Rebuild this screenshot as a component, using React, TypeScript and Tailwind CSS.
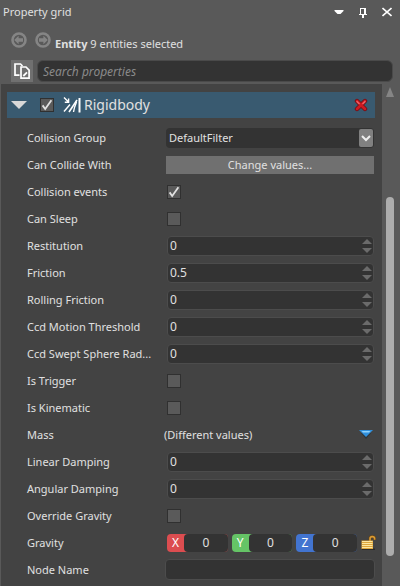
import { useState } from "react";
import type { ReactNode } from "react";

function Row({ label, id, children }: { label: string; id: string; children: ReactNode }) {
  return (
    <div className="flex h-[27px] items-center">
      <label htmlFor={id} className="w-[140px] shrink-0 whitespace-nowrap">
        {label}
      </label>
      <div className="flex min-w-0 flex-1 items-center">{children}</div>
    </div>
  );
}

function Check({ id, checked = false, label }: { id: string; checked?: boolean; label?: string }) {
  const [on, setOn] = useState(checked);
  return (
    <span className="relative flex size-[14px] shrink-0">
      <input
        id={id}
        type="checkbox"
        aria-label={label}
        checked={on}
        onChange={(e) => setOn(e.target.checked)}
        className="size-[14px] appearance-none border border-[#303030] bg-[#5a5a5a]"
      />
      {on && (
        <svg viewBox="0 0 14 14" className="pointer-events-none absolute inset-0 size-[14px]" fill="none">
          <path d="M2.6 7.4 L5.2 11 L11.4 2.2" stroke="#e0e0e0" strokeWidth="1.8" />
        </svg>
      )}
    </span>
  );
}

function NumberBox({ id, value }: { id: string; value: string }) {
  return (
    <div className="flex h-[20px] min-w-0 flex-1 items-center rounded border border-[#4c4c4c] bg-[#333333] pr-px">
      <input id={id} defaultValue={value} className="min-w-0 flex-1 bg-transparent px-0.5 text-xs outline-none" />
      <span className="flex flex-col gap-1">
        <button aria-label="Increase" className="block">
          <svg viewBox="0 0 10 5" className="h-[5px] w-[10px]"><path d="M0 5 L5 0 L10 5Z" fill="#6b6b6b" /></svg>
        </button>
        <button aria-label="Decrease" className="block">
          <svg viewBox="0 0 10 5" className="h-[5px] w-[10px]"><path d="M0 0 L5 5 L10 0Z" fill="#6b6b6b" /></svg>
        </button>
      </span>
    </div>
  );
}

function Axis({ name, color }: { name: string; color: string }) {
  return (
    <div className={`flex h-[18px] min-w-0 flex-1 rounded text-xs ${color}`}>
      <label htmlFor={`gravity-${name}`} className="w-[17px] shrink-0 text-center leading-[18px] text-white">
        {name}
      </label>
      <input
        id={`gravity-${name}`}
        defaultValue="0"
        className="w-0 min-w-0 flex-1 rounded bg-[#333333] text-center outline-none"
      />
    </div>
  );
}

function NavArrow({ back = false }: { back?: boolean }) {
  return (
    <button aria-label={back ? "Back" : "Forward"} className="size-4">
      <svg viewBox="0 0 16 16" className={back ? "size-4" : "size-4 rotate-180"} fill="none">
        <circle cx="8" cy="8" r="6.5" stroke="#858585" strokeWidth="2.6" />
        <path d="M3.2 8 L7.6 3.8 V6.3 H12 V9.7 H7.6 V12.2Z" fill="#858585" />
      </svg>
    </button>
  );
}

export default function App() {
  return (
    <main className="flex min-h-screen flex-col bg-[#595959] font-['Noto_Sans','Open_Sans',sans-serif] text-[11px] leading-4 text-[#e0e0e0]">
      <header className="flex h-6 items-center pl-[3px] pr-2">
        <h1 className="flex-1">Property grid</h1>
        <div className="flex items-center gap-[14px]">
          <button aria-label="Options">
            <svg viewBox="0 0 10 10" className="size-[10px]"><path d="M.5 3 H9.5 V4 L6.5 7 H3.5 L.5 4Z" fill="#fff" /></svg>
          </button>
          <button aria-label="Pin">
            <svg viewBox="0 0 10 12" className="h-3 w-[10px]" fill="#fff" shapeRendering="crispEdges">
              <path d="M2 2 H8 V8 H9 V9 H6 V12 H4 V9 H1 V8 H2Z M3 3 V8 H6 V3Z" fillRule="evenodd" />
            </svg>
          </button>
          <button aria-label="Close">
            <svg viewBox="0 0 10 10" className="size-[10px]"><path d="M.5 1 L9.5 9 M9.5 1 L.5 9" stroke="#fff" strokeWidth="1.6" /></svg>
          </button>
        </div>
      </header>

      <nav className="flex h-9 items-center gap-2 pb-1 pl-[11px]">
        <NavArrow back />
        <NavArrow />
        <p className="-ml-1 pt-2"><b>Entity</b> 9 entities selected</p>
      </nav>

      <div className="flex h-6 items-start pl-[11px] pr-[7px]">
        <button aria-label="Copy properties" className="flex size-[22px] items-center justify-center bg-[#707070]">
          <svg viewBox="0 0 16 16" className="size-4" fill="none" stroke="#fff" strokeWidth="1.7">
            <path d="M5.5 12.2 H1 V1 H6.5 L8.5 3" />
            <path d="M7 4 H12 L15.1 7.2 V15.1 H7Z" />
            <path d="M9.3 13 L13 9.3" strokeWidth="1.8" />
          </svg>
        </button>
        <input
          type="search"
          aria-label="Search properties"
          placeholder="Search properties"
          className="ml-1 h-[22px] min-w-0 flex-1 rounded-md border border-[#4a4a4a] bg-[#333333] px-[5px] text-xs italic outline-none placeholder:text-[#8a8a8a]"
        />
      </div>

      <div className="flex flex-1">
        <section className="ml-px min-w-0 flex-1 bg-[#434343] pl-1.5 pr-[7px] pt-2">
          <div className="flex h-[26px] items-center bg-[#395a70] pl-1 pr-[7px]">
            <button aria-label="Collapse">
              <svg viewBox="0 0 16 8" className="h-2 w-4"><path d="M0 0 H16 L8 8Z" fill="#d8d8d8" /></svg>
            </button>
            <span className="w-[13px]" />
            <Check id="rigidbody" checked label="Enable Rigidbody" />
            <svg viewBox="0 0 18 18" className="ml-[9px] size-[18px]" fill="none" stroke="#fff">
              <path d="M1 1.5 L5 5.5 M5.6 2.4 V6.2 H1.8" strokeWidth="1.4" />
              <path d="M1 15.5 L7 8.5" strokeWidth="1.4" />
              <path d="M6 16 L14 4" strokeWidth="1.6" />
              <path d="M10.5 16 Q11 12 13.5 6" strokeWidth="1.4" />
              <path d="M16.5 2 V16.5" strokeWidth="2" />
            </svg>
            <h2 className="ml-[3px] flex-1 text-sm">Rigidbody</h2>
            <button aria-label="Remove component">
              <svg viewBox="0 0 14 14" className="size-[14px]">
                <path d="M3 3 L11 11 M11 3 L3 11" stroke="#6d0f16" strokeWidth="4.4" strokeLinecap="round" />
                <path d="M3 3 L11 11 M11 3 L3 11" stroke="#cf1920" strokeWidth="2.8" strokeLinecap="round" />
                <path d="M2.6 3.2 L5.5 6 M11.4 3.2 L8.5 6" stroke="#f0656a" strokeWidth="1.4" />
              </svg>
            </button>
          </div>

          <div className="pb-2 pl-5 pr-px pt-1.5">
            <Row label="Collision Group" id="group">
              <div className="relative -ml-px flex min-w-0 flex-1">
                <select id="group" className="h-[20px] w-full appearance-none rounded bg-[#333333] px-[3px] outline-none">
                  <option>DefaultFilter</option>
                </select>
                <svg viewBox="0 0 14 18" className="pointer-events-none absolute right-px top-px h-[18px] w-[14px]" fill="none">
                  <rect width="14" height="18" rx="2" fill="#808080" />
                  <path d="M3 7 L7 11 L11 7" stroke="#eee" strokeWidth="2" />
                </svg>
              </div>
            </Row>
            <Row label="Can Collide With" id="collide">
              <button id="collide" className="-ml-px h-[18px] flex-1 bg-[#707070]">Change values...</button>
            </Row>
            <Row label="Collision events" id="events"><Check id="events" checked /></Row>
            <Row label="Can Sleep" id="sleep"><Check id="sleep" /></Row>
            <Row label="Restitution" id="restitution"><NumberBox id="restitution" value="0" /></Row>
            <Row label="Friction" id="friction"><NumberBox id="friction" value="0.5" /></Row>
            <Row label="Rolling Friction" id="rolling"><NumberBox id="rolling" value="0" /></Row>
            <Row label="Ccd Motion Threshold" id="motion"><NumberBox id="motion" value="0" /></Row>
            <Row label="Ccd Swept Sphere Rad..." id="swept"><NumberBox id="swept" value="0" /></Row>
            <Row label="Is Trigger" id="trigger"><Check id="trigger" /></Row>
            <Row label="Is Kinematic" id="kinematic"><Check id="kinematic" /></Row>
            <Row label="Mass" id="mass">
              <span className="-ml-[3px] flex-1">(Different values)</span>
              <button id="mass" aria-label="Mass values" className="pr-px">
                <svg viewBox="0 0 14 9" className="h-[9px] w-[14px]">
                  <path d="M2 3 H12 L7 9Z" fill="#2c3338" />
                  <path d="M0 0 H14 L7 7Z" fill="#2f8fdc" />
                  <path d="M2.5 1 H11.5 L10 2.6 H4Z" fill="#8fd2fb" />
                </svg>
              </button>
            </Row>
            <Row label="Linear Damping" id="linear"><NumberBox id="linear" value="0" /></Row>
            <Row label="Angular Damping" id="angular"><NumberBox id="angular" value="0" /></Row>
            <Row label="Override Gravity" id="override"><Check id="override" /></Row>
            <Row label="Gravity" id="gravity-X">
              <div className="-mr-0.5 flex min-w-0 flex-1 items-center gap-1">
                <Axis name="X" color="bg-[#dc4d50]" />
                <Axis name="Y" color="bg-[#65c466]" />
                <Axis name="Z" color="bg-[#4274d0]" />
                <button aria-label="Lock proportions">
                  <svg viewBox="0 0 15 15" className="size-[15px]" fill="none">
                    <path d="M1 14.2 H14" stroke="#262626" strokeWidth="1.2" />
                    <path d="M9 7 V3.5 Q9 1.6 11.2 1.6 Q13.6 1.6 13.6 3.6 V5" stroke="#6b4510" strokeWidth="2.6" />
                    <path d="M9 7 V3.5 Q9 1.6 11.2 1.6 Q13.6 1.6 13.6 3.6 V4.8" stroke="#d99b35" strokeWidth="1.6" />
                    <rect x="0.5" y="5.5" width="11.5" height="8.5" fill="#dda63c" />
                    <path d="M1 6.5 H11.5 M1 8.5 H11.5 M1 10.5 H11.5 M1 12.5 H11.5" stroke="#fbe6a0" />
                  </svg>
                </button>
              </div>
            </Row>
            <Row label="Node Name" id="node">
              <input id="node" className="-ml-0.5 -mr-px h-[21px] min-w-0 flex-1 rounded border border-[#4c4c4c] bg-[#333333] px-1 outline-none" />
            </Row>
          </div>
        </section>
        <div className="flex w-[18px] flex-col items-center pr-0.5 pt-[3px]">
          <button aria-label="Scroll up" className="block">
            <svg viewBox="0 0 8 10" className="h-[10px] w-2"><path d="M0 10 L4 0 L8 10Z" fill="#858585" /></svg>
          </button>
          <div className="mt-[100px] h-[359px] w-2 rounded-full bg-[#adadad]" />
        </div>
      </div>
    </main>
  );
}
